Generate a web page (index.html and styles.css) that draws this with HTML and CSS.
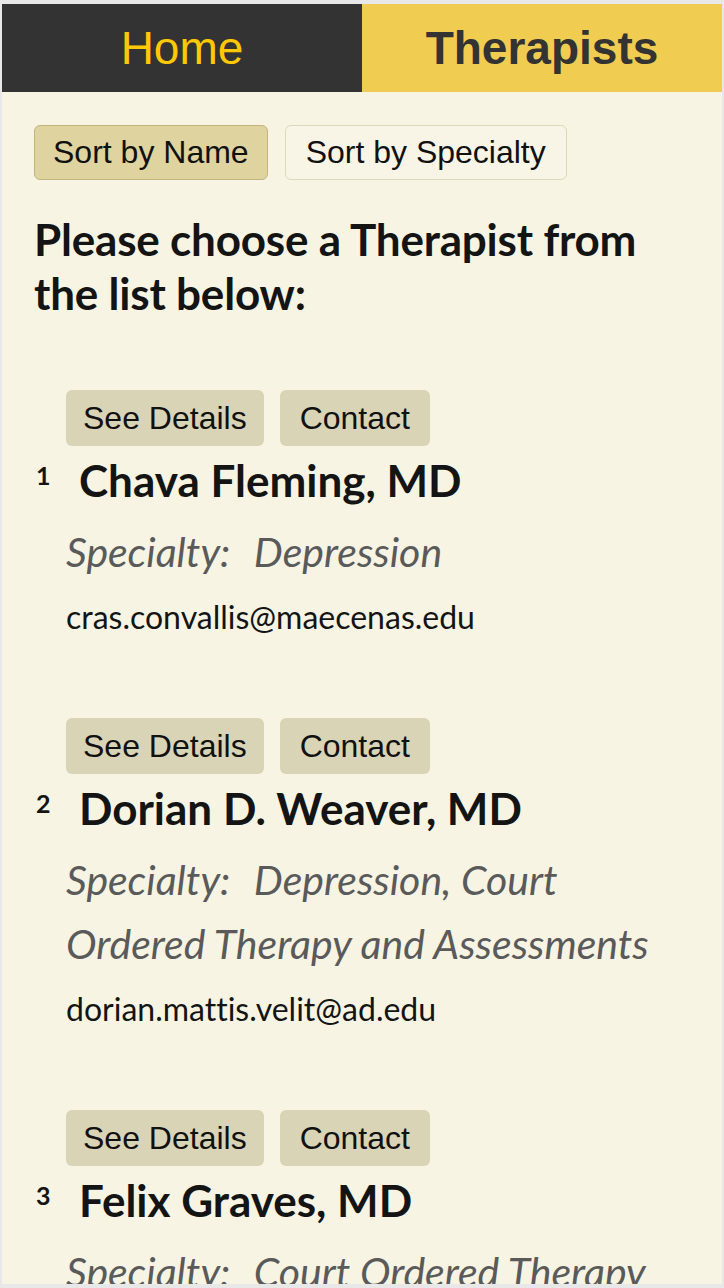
FILE: index.html
```html
<!DOCTYPE html>
<html lang="en">
<head>
<meta charset="utf-8">
<title>Therapists</title>
<link rel="stylesheet" href="styles.css">
</head>
<body>
<div class="frame">
  <nav class="tabs">
    <a class="tab tab-home" href="#">Home</a>
    <a class="tab tab-active" href="#">Therapists</a>
  </nav>
  <main class="content">
    <div class="sort">
      <button class="sort-btn sort-btn-on">Sort by Name</button>
      <button class="sort-btn">Sort by Specialty</button>
    </div>
    <h1 class="prompt">Please choose a Therapist from the list below:</h1>
    <ol class="list">
      <li class="item">
        <div class="actions">
          <button class="act-btn">See Details</button>
          <button class="act-btn">Contact</button>
        </div>
        <div class="name-row">
          <span class="num">1</span>
          <h2 class="name">Chava Fleming, MD</h2>
        </div>
        <p class="specialty"><span class="label">Specialty:</span> Depression</p>
        <p class="email">cras.convallis@maecenas.edu</p>
      </li>
      <li class="item">
        <div class="actions">
          <button class="act-btn">See Details</button>
          <button class="act-btn">Contact</button>
        </div>
        <div class="name-row">
          <span class="num">2</span>
          <h2 class="name">Dorian D. Weaver, MD</h2>
        </div>
        <p class="specialty"><span class="label">Specialty:</span> Depression, Court Ordered Therapy and Assessments</p>
        <p class="email">dorian.mattis.velit@ad.edu</p>
      </li>
      <li class="item">
        <div class="actions">
          <button class="act-btn">See Details</button>
          <button class="act-btn">Contact</button>
        </div>
        <div class="name-row">
          <span class="num">3</span>
          <h2 class="name">Felix Graves, MD</h2>
        </div>
        <p class="specialty"><span class="label">Specialty:</span> Court Ordered Therapy</p>
        <p class="email">felix.graves@ordered.edu</p>
      </li>
    </ol>
  </main>
</div>
</body>
</html>
```

FILE: styles.css
```css
html, body {
  margin: 0;
  padding: 0;
  background: #e8e8e8;
}
body {
  padding: 4px 2px 4px 2px;
}
.frame {
  height: 1280px;
  overflow: hidden;
  background: #f7f4e3;
}
.tabs {
  display: flex;
  height: 88px;
}
.tab {
  flex: 1 1 0;
  display: flex;
  align-items: center;
  justify-content: center;
  text-decoration: none;
  font-family: "Liberation Sans", Arial, sans-serif;
  font-size: 46px;
}
.tab-home {
  background: #333333;
  color: #ffc800;
}
.tab-active {
  background: #f0cc50;
  color: #333333;
  font-weight: bold;
}
.content {
  padding: 33px 34px 0 32px;
}
.sort {
  display: flex;
  gap: 17px;
}
.sort-btn {
  height: 55px;
  padding: 0 18px;
  font-family: "Liberation Sans", Arial, sans-serif;
  font-size: 32px;
  color: #111;
  background: #f8f5e6;
  border: 1px solid #dcd8bc;
  border-radius: 6px;
  margin: 0;
}
.sort-btn + .sort-btn {
  padding: 0 20px;
}
.sort-btn-on {
  background: #dfd39f;
  border-color: #c2b57c;
}
.prompt {
  margin: 32px 0 0 0;
  font-family: Lato, "Noto Sans", sans-serif;
  font-weight: bold;
  font-size: 44px;
  line-height: 54px;
  color: #141414;
  letter-spacing: -0.2px;
}
.list {
  list-style: none;
  margin: 70px 0 0 0;
  padding: 0;
}
.item {
  padding-left: 32px;
  margin-bottom: 81px;
}
.actions {
  display: flex;
  gap: 16px;
}
.act-btn {
  height: 56px;
  padding: 0 17px;
  margin: 0;
  font-family: "Liberation Sans", Arial, sans-serif;
  font-size: 32px;
  color: #111;
  background: #d9d4b6;
  border: none;
  border-radius: 6px;
}
.act-btn + .act-btn {
  padding: 0 20px;
}
.name-row {
  display: flex;
  align-items: flex-start;
  margin: 7px 0 0 -32px;
}
.num {
  width: 43px;
  flex: none;
  margin-top: 7px;
  padding-left: 2px;
  font-family: Lato, "Noto Sans", sans-serif;
  font-weight: bold;
  font-size: 25px;
  line-height: 30px;
  color: #141414;
}
.name {
  margin: 0;
  font-family: Lato, "Noto Sans", sans-serif;
  font-weight: bold;
  font-size: 44px;
  line-height: 54px;
  color: #141414;
}
.specialty {
  margin: 13px 0 0 0;
  max-width: 600px;
  font-family: Lato, "Noto Sans", sans-serif;
  font-style: italic;
  font-size: 41px;
  line-height: 64px;
  color: #5a5a5a;
}
.label {
  margin-right: 14px;
}
.email {
  margin: 13px 0 0 0;
  font-family: Lato, "Noto Sans", sans-serif;
  font-size: 32px;
  line-height: 40px;
  color: #141414;
  font-variant-ligatures: none;
}
```
